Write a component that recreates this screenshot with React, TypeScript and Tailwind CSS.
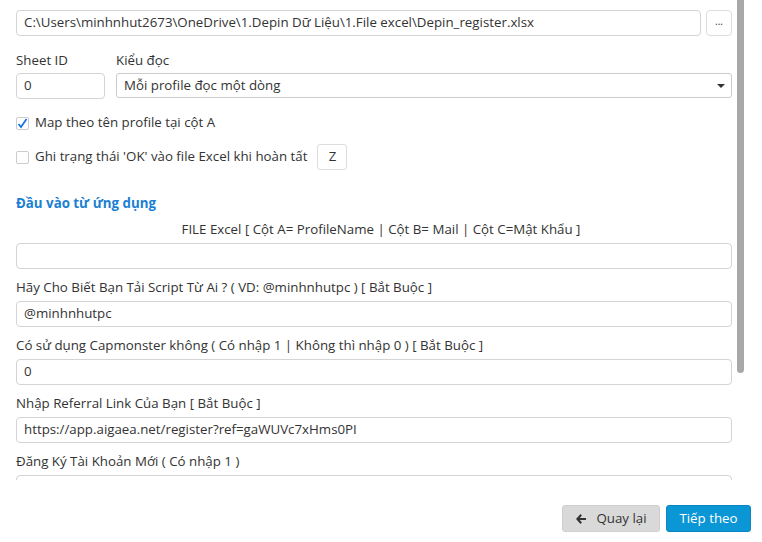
const font = { fontFamily: '"Segoe UI", "Open Sans", "Noto Sans", sans-serif' };

const fields = [
  { label: "Hãy Cho Biết Bạn Tải Script Từ Ai ? ( VD: @minhnhutpc ) [ Bắt Buộc ]", value: "@minhnhutpc" },
  { label: "Có sử dụng Capmonster không ( Có nhập 1 | Không thì nhập 0 ) [ Bắt Buộc ]", value: "0" },
  { label: "Nhập Referral Link Của Bạn [ Bắt Buộc ]", value: "https://app.aigaea.net/register?ref=gaWUVc7xHms0PI" },
  { label: "Đăng Ký Tài Khoản Mới ( Có nhập 1 )", value: "" },
];

const Input = ({ value, className = "" }: { value: string; className?: string }) => (
  <div
    className={`h-[26px] shrink-0 flex items-center px-[7px] border border-[#d4d4d4] rounded-[4px] bg-white text-[#333] ${className}`}
  >
    {value}
  </div>
);

const App = () => {
  return (
    <div className="w-[762px] h-[542px] bg-white text-[13.3px] text-[#333] flex flex-col" style={font}>
      <div className="h-[480px] shrink-0 flex items-start overflow-hidden">
        <div className="w-[737px] pl-4 pr-[5px] pt-[10px] flex flex-col">
          <div className="flex gap-[5px]">
            <Input value="C:\Users\minhnhut2673\OneDrive\1.Depin Dữ Liệu\1.File excel\Depin_register.xlsx" className="flex-1" />
            <div className="w-[26px] h-[26px] border border-[#ddd] rounded-[4px] flex items-center justify-center text-[10px] leading-none pb-1">
              ...
            </div>
          </div>

          <div className="flex gap-[11px] mt-[14px]">
            <div className="w-[89px] flex flex-col">
              <div className="h-[22px] leading-[20px]">Sheet ID</div>
              <Input value="0" className="mt-[1px] h-[25px]" />
            </div>
            <div className="flex-1 flex flex-col">
              <div className="h-[22px] leading-[20px]">Kiểu đọc</div>
              <div className="mt-[1px] h-[25px] flex items-center justify-between pl-[7px] pr-[6px] border border-[#ccc] rounded-[3px]">
                <span>Mỗi profile đọc một dòng</span>
                <svg width="8" height="4" viewBox="0 0 8 4">
                  <path d="M0 0h8L4 4z" fill="#333" />
                </svg>
              </div>
            </div>
          </div>

          <div className="flex items-center gap-[6px] mt-[14px] h-[20px]">
            <div className="w-[13px] h-[13px] border border-[#ccc] rounded-[2px] flex items-center justify-center">
              <svg width="11" height="11" viewBox="0 0 11 11">
                <path d="M1.5 6l2.5 3L9.5 1" fill="none" stroke="#1a73e8" strokeWidth="1.8" />
              </svg>
            </div>
            <span>Map theo tên profile tại cột A</span>
          </div>

          <div className="flex items-center mt-[11px] h-[26px]">
            <div className="w-[13px] h-[13px] border border-[#ccc] rounded-[2px]" />
            <span className="ml-[6px]">Ghi trạng thái 'OK' vào file Excel khi hoàn tất</span>
            <div className="ml-[10px] w-[30px] h-[26px] border border-[#ddd] rounded-[3px] flex items-start justify-center pt-[2px]">
              Z
            </div>
          </div>

          <div className="mt-[24px] font-bold text-[#1b7fd3] leading-[18px]">Đầu vào từ ứng dụng</div>
          <div className="mt-[8px] text-center leading-[18px] pl-[14px]">
            FILE Excel [ Cột A= ProfileName | Cột B= Mail | Cột C=Mật Khẩu ]
          </div>
          <Input value="" className="mt-[5px]" />

          {fields.map((f) => (
            <div key={f.label} className="flex flex-col">
              <div className="h-[32px] pt-[8px] leading-[20px]">{f.label}</div>
              <Input value={f.value} />
            </div>
          ))}
        </div>
        <div className="w-[7px]">
          <div className="h-[373px] bg-[#a8a8a8] rounded-b-[4px]" />
        </div>
      </div>

      <div className="flex justify-end gap-[6px] pt-[25px] pr-[11px]">
        <button className="w-[98px] h-[27px] flex items-center justify-center gap-[9px] bg-[#d9d9d9] border border-[#cfcfcf] rounded-[3px] text-[#333]">
          <svg width="12" height="12" viewBox="0 0 12 12">
            <path d="M5.5 1L1 6l4.5 5 1.4-1.4L4.8 7H11V5H4.8l2.1-2.6z" fill="#333" />
          </svg>
          Quay lại
        </button>
        <button className="w-[85px] h-[27px] flex items-center justify-center bg-[#0b96d6] border border-[#0a85c0] rounded-[3px] text-white">
          Tiếp theo
        </button>
      </div>
    </div>
  );
};

export default App;
